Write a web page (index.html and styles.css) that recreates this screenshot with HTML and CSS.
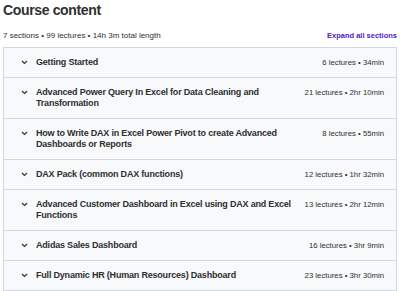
FILE: index.html
```html
<!DOCTYPE html>
<html lang="en">
<head>
  <meta charset="UTF-8">
  <title>Course content</title>
  <link rel="stylesheet" href="styles.css">
</head>
<body>

<div class="curriculum">
  <h2 class="curriculum-title">Course content</h2>
  <div class="curriculum-bar">
    <span class="curriculum-stats">7 sections • 99 lectures • 14h 3m total length</span>
    <button class="expand-btn">Expand all sections</button>
  </div>

  <div class="section-list">
    <div class="section-row">
      <span class="chevron"><svg width="7" height="5" viewBox="0 0 7 5"><path d="M1 1l2.5 2.5L6 1" fill="none" stroke="#2d2f31" stroke-width="1.1"/></svg></span>
      <span class="section-name">Getting Started</span>
      <span class="section-meta">6 lectures • 34min</span>
    </div>
    <div class="section-row">
      <span class="chevron"><svg width="7" height="5" viewBox="0 0 7 5"><path d="M1 1l2.5 2.5L6 1" fill="none" stroke="#2d2f31" stroke-width="1.1"/></svg></span>
      <span class="section-name">Advanced Power Query In Excel for Data Cleaning and Transformation</span>
      <span class="section-meta">21 lectures • 2hr 10min</span>
    </div>
    <div class="section-row">
      <span class="chevron"><svg width="7" height="5" viewBox="0 0 7 5"><path d="M1 1l2.5 2.5L6 1" fill="none" stroke="#2d2f31" stroke-width="1.1"/></svg></span>
      <span class="section-name">How to Write DAX in Excel Power Pivot to create Advanced Dashboards or Reports</span>
      <span class="section-meta">8 lectures • 55min</span>
    </div>
    <div class="section-row">
      <span class="chevron"><svg width="7" height="5" viewBox="0 0 7 5"><path d="M1 1l2.5 2.5L6 1" fill="none" stroke="#2d2f31" stroke-width="1.1"/></svg></span>
      <span class="section-name">DAX Pack (common DAX functions)</span>
      <span class="section-meta">12 lectures • 1hr 32min</span>
    </div>
    <div class="section-row">
      <span class="chevron"><svg width="7" height="5" viewBox="0 0 7 5"><path d="M1 1l2.5 2.5L6 1" fill="none" stroke="#2d2f31" stroke-width="1.1"/></svg></span>
      <span class="section-name">Advanced Customer Dashboard in Excel using DAX and Excel Functions</span>
      <span class="section-meta">13 lectures • 2hr 12min</span>
    </div>
    <div class="section-row">
      <span class="chevron"><svg width="7" height="5" viewBox="0 0 7 5"><path d="M1 1l2.5 2.5L6 1" fill="none" stroke="#2d2f31" stroke-width="1.1"/></svg></span>
      <span class="section-name">Adidas Sales Dashboard</span>
      <span class="section-meta">16 lectures • 3hr 9min</span>
    </div>
    <div class="section-row">
      <span class="chevron"><svg width="7" height="5" viewBox="0 0 7 5"><path d="M1 1l2.5 2.5L6 1" fill="none" stroke="#2d2f31" stroke-width="1.1"/></svg></span>
      <span class="section-name">Full Dynamic HR (Human Resources) Dashboard</span>
      <span class="section-meta">23 lectures • 3hr 30min</span>
    </div>
  </div>
</div>

</body>
</html>
```

FILE: styles.css
```css
body {
  font-family: 'Liberation Sans', Arial, sans-serif;
  background: #fff;
  color: #2d2f31;
  margin: 0;
  padding: 0 3px;
}

.curriculum-title {
  font-size: 14px;
  font-weight: 700;
  letter-spacing: -0.35px;
  margin: 0;
  padding-top: 1px;
  line-height: 18px;
}

.curriculum-bar {
  display: flex;
  justify-content: space-between;
  align-items: center;
  margin-top: 11px;
  height: 10px;
  margin-bottom: 7px;
}

.curriculum-stats {
  font-size: 8px;
  color: #2d2f31;
}

.expand-btn {
  background: none;
  border: none;
  padding: 0;
  font-family: inherit;
  font-size: 7.5px;
  font-weight: 700;
  color: #5022c3;
  cursor: pointer;
}

.section-list {
  border: 1px solid #d1d7dc;
}

.section-row {
  display: flex;
  align-items: flex-start;
  background: #f7f9fa;
  padding: 9px 12px 9px 17px;
  border-top: 1px solid #d1d7dc;
}

.section-row:first-child {
  border-top: none;
}

.chevron {
  display: flex;
  align-items: center;
  width: 15px;
  height: 11px;
  flex: none;
  font-size: 0;
}

.section-name {
  flex: 1;
  font-size: 9px;
  font-weight: 700;
  letter-spacing: -0.2px;
  line-height: 11px;
  padding-right: 8px;
}

.section-meta {
  flex: none;
  font-size: 7.75px;
  line-height: 11px;
}
```
